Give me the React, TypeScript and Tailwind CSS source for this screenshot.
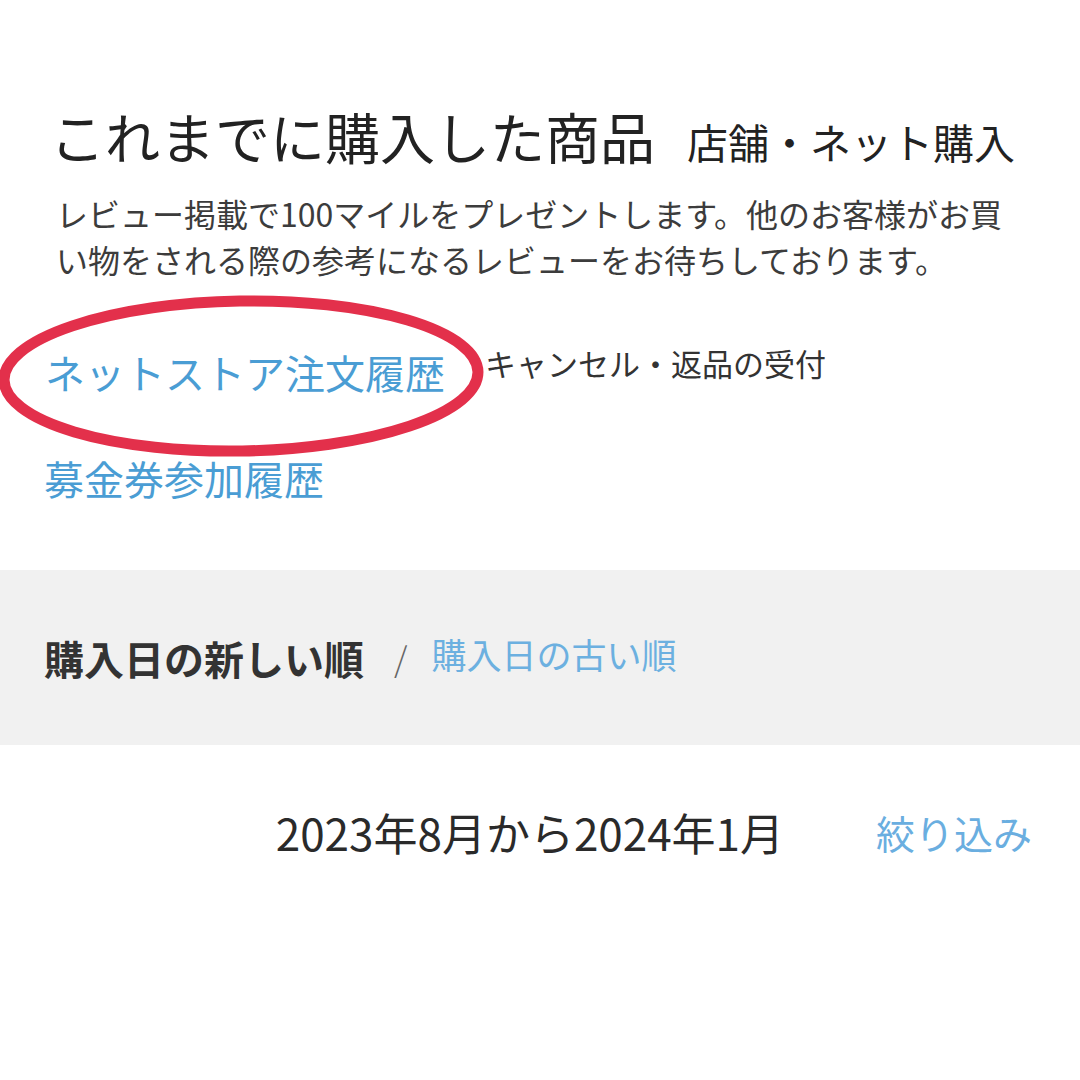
import React from "react";

const jp = "font-['Noto_Sans_CJK_JP',sans-serif]";

function CircleMark() {
  // hand-drawn red circle around the order history link
  return (
    <svg
      className="absolute left-0 top-[-48px] pointer-events-none"
      width="500"
      height="170"
      viewBox="0 0 500 170"
    >
      <ellipse
        cx="241"
        cy="82"
        rx="237"
        ry="75"
        fill="none"
        stroke="#e3304b"
        strokeWidth="11"
        transform="rotate(-1 241 82)"
      />
    </svg>
  );
}

export default function App() {
  return (
    <div className={`w-[1080px] h-[1080px] bg-white text-[#222] ${jp}`}>
      <div className="pt-[105px] pl-[50px] flex items-baseline">
        <h1 className="text-[55px] leading-[60px] font-normal text-[#222]">
          これまでに購入した商品
        </h1>
        <span className="ml-[32px] text-[41px] leading-[60px] text-[#222]">
          店舗・ネット購入
        </span>
      </div>

      <p className="mt-[19px] pl-[56px] text-[32px] leading-[46px] text-[#3c3c3c]">
        レビュー掲載で100マイルをプレゼントします。他のお客様がお買
        <br />
        い物をされる際の参考になるレビューをお待ちしております。
      </p>

      <div className="mt-[60px] pl-[45px] flex items-center relative">
        <CircleMark />
        <a className="relative text-[40px] leading-[60px] text-[#4a9dd4]">
          ネットストア注文履歴
        </a>
        <span className="ml-[40px] -mt-[18px] text-[31px] leading-[60px] text-[#333]">
          キャンセル・返品の受付
        </span>
      </div>

      <div className="mt-[46px] pl-[44px]">
        <a className="text-[40px] leading-[60px] text-[#4a9dd4]">
          募金券参加履歴
        </a>
      </div>

      <div className="mt-[62px] h-[175px] bg-[#f1f1f1] flex items-center pl-[44px]">
        <span className="text-[40px] font-bold text-[#333]">購入日の新しい順</span>
        <span className="ml-[30px] mr-[24px] text-[34px] text-[#666] font-light">/</span>
        <a className="text-[35px] text-[#6cb0e0] -mt-[6px]">購入日の古い順</a>
      </div>

      <div className="mt-[57px] flex items-center justify-end pr-[48px]">
        <span className="text-[44px] leading-[60px] text-[#2a2a2a]">
          2023年8月から2024年1月
        </span>
        <a className="ml-[92px] text-[39px] leading-[60px] text-[#6aaee0]">
          絞り込み
        </a>
      </div>
    </div>
  );
}
